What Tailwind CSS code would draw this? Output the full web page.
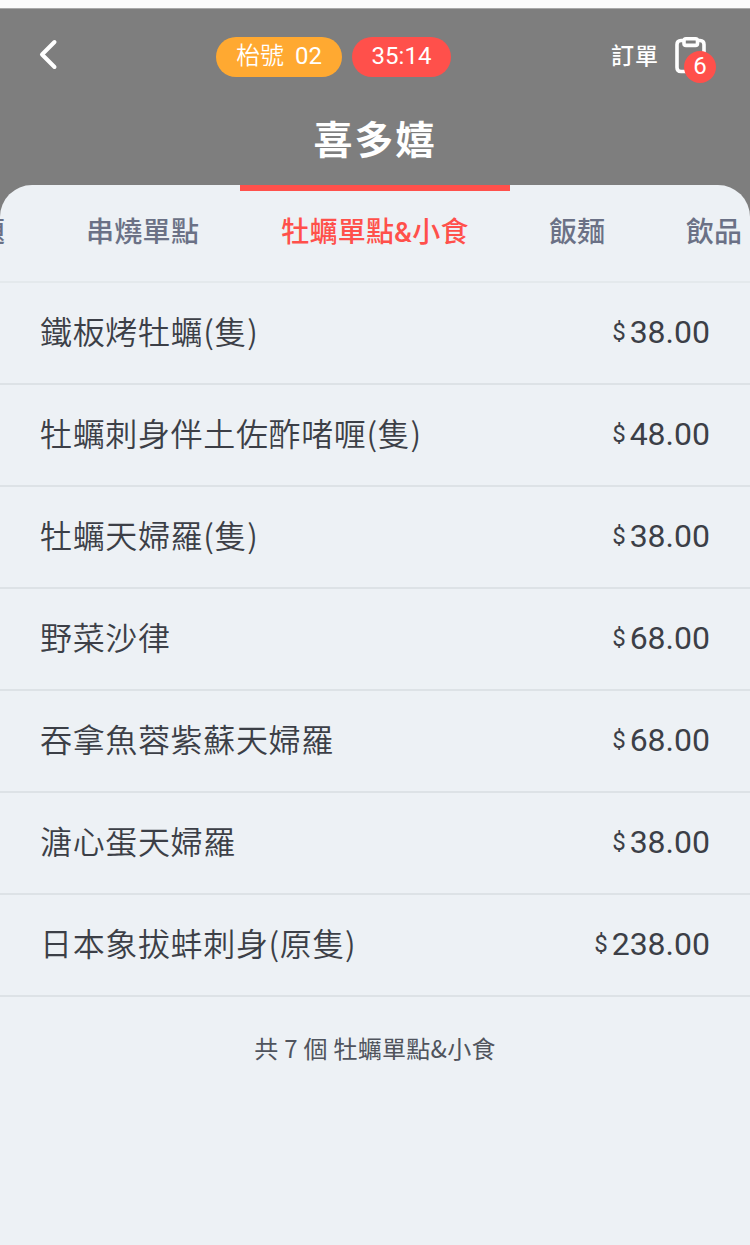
<!DOCTYPE html>
<html lang="zh-Hant">

<head>
    <meta charset="UTF-8">
    <meta name="viewport" content="width=device-width, initial-scale=1.0">
    <title>喜多嬉</title>
    <script src="https://cdn.jsdelivr.net/npm/@tailwindcss/browser@4"></script>
</head>

<body class="bg-[#7e7e7e] font-[Roboto,'Noto_Sans_CJK_TC',sans-serif]">

    <div class="flex flex-col w-[750px] h-[1245px] overflow-hidden">
        <!-- Status bar -->
        <div class="h-[9px] shrink-0 bg-[#fbfbfb] border-b border-[#a8a8a8]"></div>

        <!-- Header -->
        <header class="h-44 shrink-0 text-white">
            <div class="grid grid-cols-[216px_1fr_auto] pt-7 pr-[34px]">
                <button class="pl-[38px] h-10 w-20">
                    <svg class="w-5 h-8 -mt-1.5" viewBox="0 0 20 32" fill="none" stroke="currentColor" stroke-width="4"
                        stroke-linecap="round" stroke-linejoin="round">
                        <path d="M16.5 4 L4 16.5 L16.5 29" />
                    </svg>
                </button>
                <div class="flex gap-2.5 text-2xl">
                    <span class="w-[126px] h-10 rounded-full bg-[#ffa931] text-center whitespace-pre leading-[39px] font-[350]">枱號 <span class="ml-[5px] font-normal">02</span></span>
                    <span class="w-[99px] h-10 rounded-full bg-[#ff504b] text-center leading-[38px]">35:14</span>
                </div>
                <div class="flex">
                    <span class="text-[23px] leading-10 tracking-[1px] font-medium mr-4">訂單</span>
                    <div class="relative w-[41px] h-12">
                        <svg class="w-8 h-10" viewBox="0 0 32 40" fill="none" stroke="currentColor" stroke-width="3.6"
                            stroke-linejoin="round" stroke-linecap="round">
                            <path d="M8 3.5 H6 Q2 3.5 2 7.5 V30.5 Q2 34.5 6 34.5 H26 Q29 34.5 29 30.5 V7.5 Q29 3.5 25 3.5 H23" />
                            <rect x="9" y="1.8" width="13.5" height="6.6" rx="2" />
                        </svg>
                        <span class="absolute left-[9px] top-[14px] w-8 h-8 rounded-full bg-[#ff504b] text-center text-2xl leading-[31px]">6</span>
                    </div>
                </div>
            </div>
            <h1 class="text-center text-[39px] leading-[56px] tracking-[2px] font-bold mt-7">喜多嬉</h1>
        </header>

        <!-- Menu sheet -->
        <main class="grow bg-[#edf1f5] rounded-t-[32px] overflow-hidden text-[#3c3f47]">
            <nav class="flex h-[98px] border-b-2 border-[#e4e9ec] text-[28px] leading-24 font-medium text-[#6b7186] whitespace-nowrap">
                <div class="w-12 flex justify-end pr-[43px] shrink-0">主題</div>
                <div class="w-[192px] shrink-0 pl-[38px] tracking-[0.3px]">串燒單點</div>
                <div class="w-[270px] shrink-0 border-t-6 border-[#ff504b] text-[#ff504b] text-center leading-[84px] tracking-[0.2px]">牡蠣單點&amp;小食</div>
                <div class="w-[137px] shrink-0 pl-[39px]">飯麺</div>
                <div class="w-[137px] shrink-0 pl-[39px]">飲品</div>
            </nav>
            <ul id="items" class="text-[32px] leading-[98px]"></ul>
            <p class="text-center text-2xl mt-[33px] leading-9 tracking-[0.3px] text-[#50545d] font-['Noto_Sans_CJK_TC',sans-serif]">共 7 個 牡蠣單點&amp;小食</p>
        </main>
    </div>

    <script>
        const items = [
            ["鐵板烤牡蠣(隻)", "38.00"],
            ["牡蠣刺身伴土佐酢啫喱(隻)", "48.00"],
            ["牡蠣天婦羅(隻)", "38.00"],
            ["野菜沙律", "68.00"],
            ["吞拿魚蓉紫蘇天婦羅", "68.00"],
            ["溏心蛋天婦羅", "38.00"],
            ["日本象拔蚌刺身(原隻)", "238.00"],
        ];

        document.getElementById("items").innerHTML = items.map(([name, price]) => `
            <li class="flex justify-between h-[102px] px-10 border-b-2 border-[#dde2e6]">
                <span class="leading-[95px] tracking-[0.65px] font-[350] font-['Noto_Sans_CJK_TC',sans-serif]">${name}</span>
                <span class="flex"><span class="text-2xl leading-[98px] mr-1">$</span>${price}</span>
            </li>`).join("");
    </script>

</body>

</html>
